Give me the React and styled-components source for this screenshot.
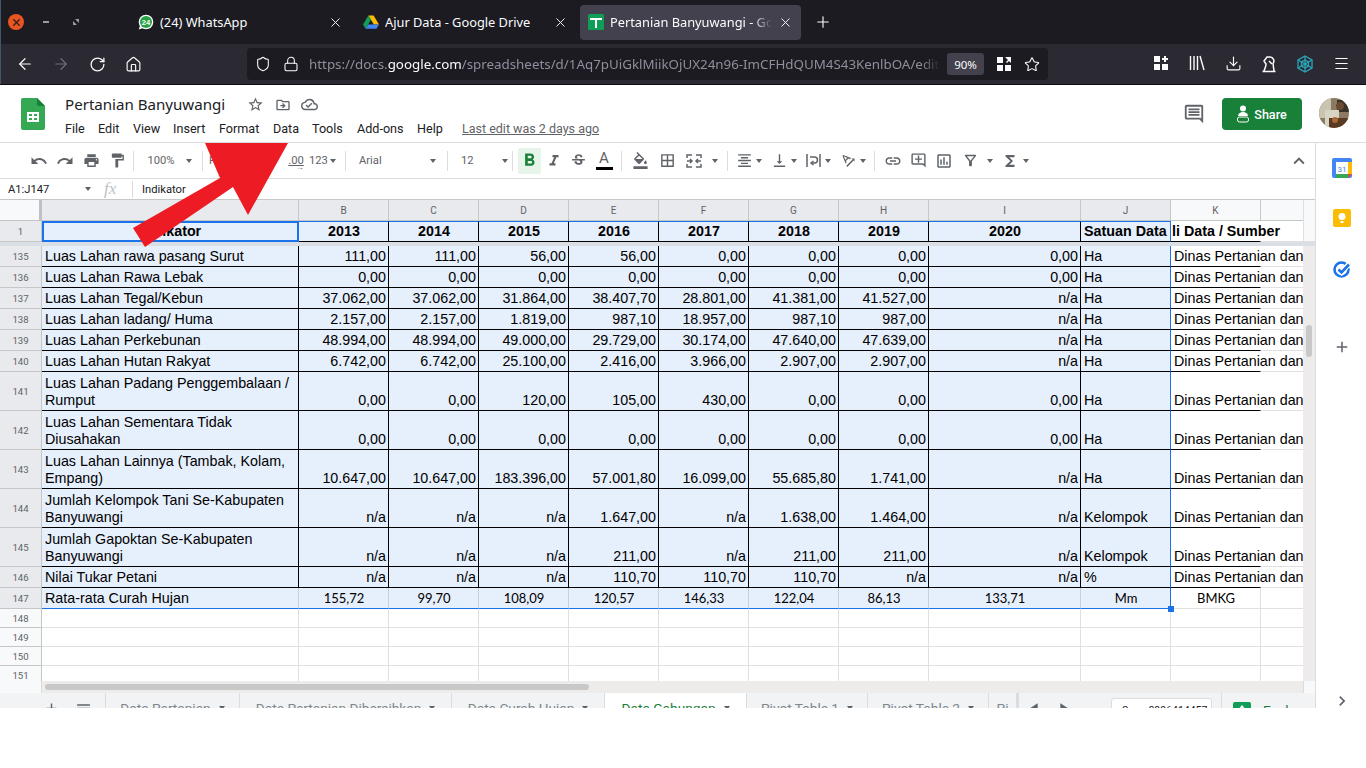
import React from "react";
import styled, { createGlobalStyle } from "styled-components";
import {
  MdUndo, MdRedo, MdLocalPrintshop, MdFormatPaint, MdFormatItalic, MdStrikethroughS,
  MdFormatColorFill, MdBorderAll, MdFormatAlignCenter, MdVerticalAlignBottom,
  MdTextRotationAngleup, MdLink, MdOutlineAddComment, MdOutlineInsertChart, MdOutlineFilterAlt,
  MdFunctions, MdExpandLess, MdStarBorder, MdOutlineDriveFileMove, MdOutlineCloudDone,
  MdOutlineInsertComment, MdAdd, MdMenu, MdChevronRight, MdPlayArrow, MdFormatBold,
} from "react-icons/md";
import { ArrowLeft, ArrowRight, RotateCw, Home, Shield, Lock, Star, X, Plus, Download, Menu } from "lucide-react";

const GlobalStyle = createGlobalStyle`
  html, body { margin: 0; padding: 0; background: #fff; overflow: hidden; }
  * { box-sizing: border-box; }
`;

const Window = styled.div`
  width: 1366px;
  height: 768px;
  overflow: hidden;
  background: #fff;
  font-family: "Noto Sans", sans-serif;
`;

/* browser chrome */
const TabBar = styled.div`
  height: 44px;
  background: #1c1b22;
  display: flex;
  align-items: center;
  color: #fbfbfe;
  box-shadow: inset 1px 0 0 #46566a;
`;
const WinControls = styled.div`
  width: 130px;
  display: flex;
  align-items: center;
  padding-left: 8px;
  gap: 14px;
`;
const CloseDot = styled.div`
  width: 16px;
  height: 16px;
  border-radius: 50%;
  background: #e95420;
  color: #33221c;
  display: flex;
  align-items: center;
  justify-content: center;
`;
const WinGlyph = styled.div`
  width: 16px;
  display: flex;
  justify-content: center;
`;
const Tab = styled.div`
  width: 221px;
  height: 35px;
  margin-right: 4px;
  padding: 0 8px;
  border-radius: 4px;
  display: flex;
  align-items: center;
  gap: 6px;
  font-size: 12.8px;
  background: ${p => (p.$active ? "#42414d" : "transparent")};
`;
const TabLabel = styled.span`
  flex: 1;
  white-space: nowrap;
  overflow: hidden;
  mask-image: ${p => (p.$fade ? "linear-gradient(to right, #000 88%, transparent)" : "none")};
`;
const NewTab = styled.div`
  margin-left: 9px;
  display: flex;
`;
const NavBar = styled.div`
  height: 41px;
  background: #2b2a33;
  border-bottom: 1px solid #0c0c0d;
  padding-left: 7px;
  display: flex;
  align-items: center;
  color: #fbfbfe;
  box-shadow: inset 1px 0 0 #46566a;
`;
const NavBtn = styled.div`
  width: 36px;
  display: flex;
  justify-content: center;
  color: ${p => (p.$off ? "#6f6e77" : "#fbfbfe")};
`;
const UrlBox = styled.div`
  width: 801px;
  height: 32px;
  margin-left: 96px;
  padding: 0 8px;
  border-radius: 4px;
  background: #1c1b22;
  display: flex;
  align-items: center;
`;
const UrlIcon = styled.div`
  width: 16px;
  flex: none;
  margin-right: ${p => p.$mr ?? 12}px;
  display: flex;
  justify-content: center;
`;
const UrlText = styled.div`
  flex: 1;
  min-width: 0;
  font-size: 13.35px;
  color: #8f8f9d;
  white-space: nowrap;
  overflow: hidden;
  mask-image: linear-gradient(to right, #000 97%, transparent);
  b { color: #fbfbfe; font-weight: 400; }
`;
const ZoomBadge = styled.div`
  width: 37px;
  height: 22px;
  flex: none;
  margin: 0 12px 0 7px;
  border-radius: 3px;
  background: #42414d;
  font-size: 11.5px;
  display: flex;
  align-items: center;
  justify-content: center;
`;
const ToolIcons = styled.div`
  margin-left: 95px;
  display: flex;
`;

/* docs header */
const SheetApp = styled.div`
  height: 623px;
  overflow: hidden;
  display: flex;
  flex-direction: column;
  position: relative;
  font-family: Roboto, sans-serif;
  color: #202124;
`;
const DocHeader = styled.div`
  height: 58px;
  flex: none;
  border-bottom: 1px solid #dadce0;
  display: flex;
  align-items: flex-start;
  padding: 13px 0 0 21px;
`;
const DocTitles = styled.div`
  margin: -1px 0 0 20px;
  width: 1060px;
`;
const TitleRow = styled.div`
  display: flex;
  align-items: center;
  height: 19px;
  margin-top: -2px;
`;
const DocTitle = styled.div`
  font-family: "Noto Sans", sans-serif;
  font-size: 15.1px;
  line-height: 19px;
  width: 177px;
`;
const TitleIcon = styled.div`
  width: 27px;
  display: flex;
  justify-content: center;
  color: #5f6368;
`;
const MenuRow = styled.div`
  display: flex;
  margin-top: 7px;
  font-size: 12.6px;
  line-height: 16px;
`;
const MenuItem = styled.span`
  width: ${p => p.$w}px;
`;
const LastEdit = styled.span`
  color: #5f6368;
  text-decoration: underline;
  font-size: 12.5px;
`;
const ShareZone = styled.div`
  margin-left: 58px;
  display: flex;
  align-items: flex-start;
`;
const ShareBtn = styled.div`
  width: 80px;
  height: 32px;
  margin: 0 17px 0 17px;
  border-radius: 4px;
  background: #188038;
  color: #fff;
  font-size: 12.6px;
  font-weight: 500;
  display: flex;
  align-items: center;
  justify-content: center;
  gap: 5px;
`;

/* body */
const Body = styled.div`
  flex: 1;
  min-height: 0;
  display: flex;
`;
const Main = styled.div`
  width: 1316px;
  display: flex;
  flex-direction: column;
  border-right: 1px solid #dadce0;
`;
const Side = styled.div`
  width: 50px;
  display: flex;
  flex-direction: column;
  align-items: center;
  padding: 15px 0 0 1px;
`;
const SideSlot = styled.div`
  height: ${p => p.$h}px;
  flex: none;
  display: flex;
  align-items: flex-start;
  justify-content: center;
  color: #5f6368;
`;
const SideRule = styled.div`
  width: 18px;
  height: 1px;
  background: #dadce0;
  margin-bottom: 30px;
`;
const Toolbar = styled.div`
  height: 36px;
  flex: none;
  border-bottom: 1px solid #dadce0;
  padding-left: 26px;
  display: flex;
  align-items: center;
  color: #5f6368;
  font-size: 11.2px;
`;
const Tool = styled.div`
  width: ${p => p.$w}px;
  height: 26px;
  flex: none;
  margin-left: ${p => p.$ml || 0}px;
  display: flex;
  align-items: center;
  justify-content: ${p => (p.$left ? "flex-start" : "center")};
  padding-left: ${p => p.$pl || 0}px;
  background: ${p => (p.$on ? "#e6f4ea" : "transparent")};
  color: ${p => (p.$on ? "#188038" : "#5f6368")};
  border-radius: 2px;
`;
const Sep = styled.div`
  width: 1px;
  height: 20px;
  flex: none;
  background: #dadce0;
  margin: 0 ${p => p.$m ?? 3}px;
`;
const Caret = styled.span`
  width: 0;
  height: 0;
  flex: none;
  margin-left: ${p => p.$ml ?? 4}px;
  border-left: 3.5px solid transparent;
  border-right: 3.5px solid transparent;
  border-top: 4px solid #5f6368;
`;
const TabCaret = styled(Caret)`
  margin-left: 8px;
  margin-top: 6px;
`;
const DecimalMark = styled.span`
  position: relative;
  text-decoration: underline;
  &::after {
    content: "→";
    position: absolute;
    right: 0;
    top: 9px;
    font-size: 8px;
  }
`;
const ColorA = styled.div`
  display: flex;
  flex-direction: column;
  align-items: center;
  font-size: 15px;
  line-height: 15px;
  &::after { content: ""; width: 17px; height: 3px; background: #000; margin-top: 1px; }
`;
const FormulaBar = styled.div`
  height: 21px;
  flex: none;
  border-bottom: 1px solid #c7c7c7;
  display: flex;
  align-items: center;
  font-size: 11.2px;
  color: #202124;
`;
const NameBox = styled.div`
  width: 104px;
  padding: 0 13px 0 8px;
  display: flex;
  align-items: center;
  justify-content: space-between;
`;
const FxMark = styled.div`
  width: 28px;
  font-family: "Liberation Serif", serif;
  font-style: italic;
  font-size: 17px;
  color: #bdc1c6;
`;
const FormulaText = styled.div`
  border-left: 1px solid #dadce0;
  padding-left: 9px;
  height: 17px;
  line-height: 17px;
`;
const GridArea = styled.div`
  height: 481px;
  flex: none;
  display: flex;
  overflow: hidden;
`;
const Table = styled.div`
  width: 1304px;
  overflow: hidden;
`;
const Row = styled.div`
  height: ${p => p.$h}px;
  display: grid;
  grid-template-columns: 42px 257px repeat(7, 90px) 152px 90px 90px 43px;
`;
const ColHead = styled.div`
  background: ${p => (p.$sel ? "#e8eaed" : "#f8f9fa")};
  border-right: 1px solid #c4c7c5;
  border-bottom: 1px solid #c4c7c5;
  color: #5f6368;
  font-size: 10px;
  display: flex;
  align-items: center;
  justify-content: center;
`;
const Corner = styled(ColHead)`
  border-right: 3px solid #bdc1c6;
  background: #f8f9fa;
`;
const RowHead = styled.div`
  background: ${p => (p.$sel ? "#e8eaed" : "#f8f9fa")};
  border-right: 1px solid #c4c7c5;
  border-bottom: 1px solid #c4c7c5;
  color: #5f6368;
  font-size: 9.6px;
  display: flex;
  align-items: center;
  justify-content: center;
`;
const Cell = styled.div`
  position: relative;
  min-width: 0;
  padding: 0 2px 1px 3px;
  background: ${p => (p.$sel ? "#e6effc" : "transparent")};
  border-right: 1px solid ${p => p.$right || "#000"};
  border-bottom: 1px solid ${p => p.$bottom || "#000"};
  font-family: "Liberation Sans", sans-serif;
  font-size: 14.3px;
  line-height: 17px;
  color: #000;
  display: flex;
  align-items: flex-end;
  justify-content: ${p => (p.$align === "right" ? "flex-end" : p.$align === "center" ? "center" : "flex-start")};
`;
const HeadCell = styled(Cell)`
  font-weight: 700;
  align-items: center;
  padding-bottom: 0;
  border-top: 1px solid ${p => p.$top || "#1a73e8"};
`;
const ActiveCell = styled(HeadCell)`
  border: 2px solid #1a73e8;
  justify-content: center;
`;
const ClippedHead = styled(HeadCell)`
  padding-left: 1px;
`;
const OverText = styled.span`
  white-space: nowrap;
`;
const LabelCell = styled(Cell)`
  align-items: center;
  padding-bottom: 0;
`;
const CurahCell = styled(LabelCell)`
  font-family: Lato, sans-serif;
  font-size: 13px;
`;
const FillHandle = styled.div`
  position: absolute;
  right: -4px;
  bottom: -4px;
  width: 6px;
  height: 6px;
  background: #1a73e8;
  z-index: 2;
`;
const BlankCell = styled.div`
  border-right: 1px solid #e0e0e0;
  border-bottom: 1px solid #e0e0e0;
`;
const TailCell = styled.div`
  border-bottom: 1px solid #e0e0e0;
`;
const FreezeBand = styled.div`
  height: 4px;
  flex: none;
  background: #dadfe6;
`;
const VScroll = styled.div`
  width: 12px;
  background: #edecea;
  display: flex;
  flex-direction: column;
`;
const VScrollHead = styled.div`
  height: 42px;
  flex: none;
  background: #f8f9fa;
  border-left: 1px solid #e0e0e0;
  border-bottom: 1px solid #e0e0e0;
`;
const VThumb = styled.div`
  height: 32px;
  margin: 79px 3px 0;
  background: #c8c8c8;
  border-radius: 3px;
`;
const HScroll = styled.div`
  height: 12px;
  flex: none;
  background: #edecea;
  display: flex;
`;
const HCorner = styled.div`
  width: ${p => p.$w}px;
  flex: none;
  background: #f8f9fa;
  border: 0 solid #dadce0;
  border-width: ${p => (p.$end ? "0 0 0 1px" : "0 1px 0 0")};
`;
const HTrack = styled.div`
  flex: 1;
  padding: 3px 0 0 3px;
`;
const HThumb = styled.div`
  width: 544px;
  height: 6px;
  background: #c8c8c8;
  border-radius: 3px;
`;
const SheetTabs = styled.div`
  height: 37px;
  flex: none;
  background: #f1f3f4;
  display: flex;
  font-size: 13.7px;
  color: #5f6368;
`;
const StripBtn = styled.div`
  width: ${p => p.$w}px;
  margin-left: ${p => p.$ml || 0}px;
  padding-top: 7px;
  display: flex;
  justify-content: center;
  color: #5f6368;
`;
const SheetTab = styled.div`
  width: ${p => p.$w}px;
  padding-top: 7px;
  background: ${p => (p.$on ? "#fff" : "transparent")};
  color: ${p => (p.$on ? "#188038" : "#80868b")};
  border-right: 1px solid #dadce0;
  border-left: ${p => (p.$first ? "1px solid #dadce0" : "0")};
  display: flex;
  justify-content: center;
  white-space: nowrap;
  overflow: hidden;
`;
const StripTail = styled.div`
  flex: 1;
  display: flex;
  border-left: 2px solid #dadce0;
`;
const SumBox = styled.div`
  width: 101px;
  height: 30px;
  margin: 5px 9px 0 34px;
  background: #fff;
  border: 1px solid #dadce0;
  border-radius: 3px;
  font-size: 10.5px;
  color: #202124;
  padding: 5px 0 0 10px;
  white-space: nowrap;
  overflow: hidden;
`;
const Explore = styled.div`
  flex: 1;
  border-left: 1px solid #dadce0;
  padding: 9px 0 0 11px;
  display: flex;
  gap: 12px;
  color: #188038;
`;
const RedArrow = styled.svg`
  position: absolute;
  left: 120px;
  top: 58px;
  pointer-events: none;
  z-index: 5;
`;

const SheetsLogo = () => (
  <svg width="24" height="32" viewBox="0 0 24 32">
    <path d="M2 0h14l8 8v22a2 2 0 0 1-2 2H2a2 2 0 0 1-2-2V2a2 2 0 0 1 2-2z" fill="#34a853" />
    <path d="M16 0l8 8h-6a2 2 0 0 1-2-2z" fill="#188038" />
    <path d="M6 14h12v10H6z M8 16v2h3v-2z M13 16v2h3v-2z M8 20v2h3v-2z M13 20v2h3v-2z" fill="#fff" fillRule="evenodd" />
  </svg>
);

const WhatsIcon = () => (
  <svg width="16" height="16" viewBox="0 0 16 16">
    <circle cx="8" cy="8" r="7.3" fill="#fff" />
    <path d="M.8 15.4l1.2-4 3 2.6z" fill="#fff" />
    <circle cx="8" cy="8" r="6" fill="#25a244" />
    <text x="8" y="10.600" textAnchor="middle" fontSize="7.500" fontWeight="700" fill="#fff" fontFamily="Liberation Sans">24</text>
  </svg>
);

const DriveIcon = () => (
  <svg width="16" height="16" viewBox="0 0 16 16">
    <path d="M5.400 1.500h5.200L16 10.500h-5.200z" fill="#fbbc04" />
    <path d="M5.400 1.500L0 10.500l2.600 4.200L8 5.800z" fill="#0f9d58" />
    <path d="M5.200 10.500H16l-2.600 4.200H2.600z" fill="#4285f4" />
  </svg>
);

const SheetTabIcon = () => (
  <svg width="16" height="16" viewBox="0 0 16 16">
    <rect width="16" height="16" rx="1.500" fill="#0f9d58" />
    <path d="M2 4h12v2H9v8H7V6H2z" fill="#fff" />
  </svg>
);

const FourSquares = ({ plus }) => (
  <svg width="16" height="16" viewBox="0 0 16 16" fill="#fbfbfe">
    <rect x="1" y="1" width="6" height="6" />
    <rect x="1" y="9" width="6" height="6" />
    <rect x="9" y="9" width="6" height="6" />
    {plus ? <path d="M11 1h2v2h2v2h-2v2h-2V5H9V3h2z" /> : <path d="M9 1h6v6l-2-2-2 2-1-1 2-2z" />}
  </svg>
);

const LibraryIcon = () => (
  <svg width="16" height="16" viewBox="0 0 16 16" fill="none" stroke="#fbfbfe" strokeWidth="1.400">
    <path d="M1.500 1v14M5 1v14M8.500 1v14M11 1l4 14" />
  </svg>
);

const Spider = () => (
  <svg width="18" height="18" viewBox="0 0 18 18" fill="none" stroke="#2aa3b8" strokeWidth="1.300">
    <path d="M9 1l7 4v8l-7 4-7-4V5z" />
    <path d="M9 5l3.500 2v4L9 13l-3.500-2V7z" />
    <path d="M9 1v16M2 5l14 8M16 5L2 13" />
  </svg>
);

const Reader = () => (
  <svg width="16" height="18" viewBox="0 0 16 18" fill="none" stroke="#fbfbfe" strokeWidth="1.500">
    <path d="M3 16c1-3 2-4 2-7L3 6l3-4h3a4 4 0 0 1 3 6.500L13 16" />
    <path d="M1.500 16.500h13M8 6l3 3" />
  </svg>
);

const MergeIcon = () => (
  <svg width="16" height="16" viewBox="0 0 16 16" fill="none" stroke="#5f6368" strokeWidth="1.500">
    <path d="M1 5V2h5M10 2h5v3M1 11v3h5M10 14h5v-3M1 8h4M15 8h-4M4 6l2 2-2 2M12 6l-2 2 2 2" />
  </svg>
);

const WrapIcon = () => (
  <svg width="17" height="17" viewBox="0 0 17 17" fill="none" stroke="#5f6368" strokeWidth="1.500">
    <path d="M2 2v13M15 2v13M5 5h4.500a2.500 2.500 0 0 1 0 6H7" />
    <path d="M8.500 9L6 11l2.500 2" />
  </svg>
);

const CalendarIcon = () => (
  <svg width="20" height="20" viewBox="0 0 20 20">
    <rect width="20" height="20" rx="2" fill="#4285f4" />
    <rect x="4" y="4" width="12" height="12" fill="#fff" />
    <rect x="16" y="4" width="4" height="12" fill="#fbbc04" />
    <rect x="4" y="16" width="12" height="4" fill="#34a853" />
    <path d="M16 16h4l-4 4z" fill="#ea4335" />
    <text x="10" y="13.500" textAnchor="middle" fontSize="8" fill="#4285f4" fontFamily="Roboto">31</text>
  </svg>
);

const KeepIcon = () => (
  <svg width="18" height="18" viewBox="0 0 18 18">
    <rect width="18" height="18" rx="2" fill="#fbbc04" />
    <circle cx="9" cy="7.500" r="3.500" fill="#fff" />
    <rect x="7.500" y="12" width="3" height="2" fill="#fff" />
  </svg>
);

const TasksIcon = () => (
  <svg width="20" height="20" viewBox="0 0 20 20" fill="none">
    <circle cx="9.500" cy="10.500" r="7" stroke="#1a73e8" strokeWidth="2.600" />
    <path d="M6 10l3.500 3.500L17 5" stroke="#fff" strokeWidth="5" />
    <path d="M6.500 10.500l3 3L17 5.500" stroke="#1a73e8" strokeWidth="2.600" />
  </svg>
);

const Avatar = () => (
  <svg width="30" height="30" viewBox="0 0 30 30">
    <clipPath id="av"><circle cx="15" cy="15" r="15" /></clipPath>
    <g clipPath="url(#av)">
      <rect width="30" height="30" fill="#8c7a62" />
      <rect width="12" height="20" fill="#c9c4b0" />
      <rect x="18" y="2" width="12" height="12" fill="#3b3227" />
      <circle cx="21" cy="8" r="4" fill="#6b4a32" />
      <rect x="6" y="12" width="14" height="18" fill="#d8d4c4" />
      <rect x="10" y="20" width="20" height="10" fill="#5a3a22" />
      <circle cx="16" cy="22" r="3" fill="#a8683a" />
    </g>
  </svg>
);

const rows = [
  [135, 21, "Luas Lahan rawa pasang Surut", ["111,00", "111,00", "56,00", "56,00", "0,00", "0,00", "0,00", "0,00"], "Ha"],
  [136, 21, "Luas Lahan Rawa Lebak", ["0,00", "0,00", "0,00", "0,00", "0,00", "0,00", "0,00", "0,00"], "Ha"],
  [137, 21, "Luas Lahan Tegal/Kebun", ["37.062,00", "37.062,00", "31.864,00", "38.407,70", "28.801,00", "41.381,00", "41.527,00", "n/a"], "Ha"],
  [138, 21, "Luas Lahan ladang/ Huma", ["2.157,00", "2.157,00", "1.819,00", "987,10", "18.957,00", "987,10", "987,00", "n/a"], "Ha"],
  [139, 21, "Luas Lahan Perkebunan", ["48.994,00", "48.994,00", "49.000,00", "29.729,00", "30.174,00", "47.640,00", "47.639,00", "n/a"], "Ha"],
  [140, 21, "Luas Lahan Hutan Rakyat", ["6.742,00", "6.742,00", "25.100,00", "2.416,00", "3.966,00", "2.907,00", "2.907,00", "n/a"], "Ha"],
  [141, 39, "Luas Lahan Padang Penggembalaan / Rumput", ["0,00", "0,00", "120,00", "105,00", "430,00", "0,00", "0,00", "0,00"], "Ha"],
  [142, 39, "Luas Lahan Sementara Tidak Diusahakan", ["0,00", "0,00", "0,00", "0,00", "0,00", "0,00", "0,00", "0,00"], "Ha"],
  [143, 39, "Luas Lahan Lainnya (Tambak, Kolam, Empang)", ["10.647,00", "10.647,00", "183.396,00", "57.001,80", "16.099,00", "55.685,80", "1.741,00", "n/a"], "Ha"],
  [144, 39, "Jumlah Kelompok Tani Se-Kabupaten Banyuwangi", ["n/a", "n/a", "n/a", "1.647,00", "n/a", "1.638,00", "1.464,00", "n/a"], "Kelompok"],
  [145, 39, "Jumlah Gapoktan Se-Kabupaten Banyuwangi", ["n/a", "n/a", "n/a", "211,00", "n/a", "211,00", "211,00", "n/a"], "Kelompok"],
  [146, 21, "Nilai Tukar Petani", ["n/a", "n/a", "n/a", "110,70", "110,70", "110,70", "n/a", "n/a"], "%"],
];

const years = ["2013", "2014", "2015", "2016", "2017", "2018", "2019", "2020"];
const colLetters = ["B", "C", "D", "E", "F", "G", "H", "I", "J"];
const curah = ["155,72", "99,70", "108,09", "120,57", "146,33", "122,04", "86,13", "133,71"];
const BLUE = "#1a73e8";
const SOFT = "#c7d0df";

function DataRow({ num, h, label, values, unit }) {
  return (
    <Row $h={h}>
      <RowHead $sel>{num}</RowHead>
      <Cell $sel>{label}</Cell>
      {values.map((v, i) => (
        <Cell key={i} $sel $align="right">{v}</Cell>
      ))}
      <Cell $sel $right={BLUE}>{unit}</Cell>
      <Cell $right="transparent"><OverText>Dinas Pertanian dan Peternakan</OverText></Cell>
      <TailCell />
    </Row>
  );
}

function EmptyRow({ num, h }) {
  return (
    <Row $h={h}>
      <RowHead>{num}</RowHead>
      {Array.from({ length: 12 }).map((_, i) => <BlankCell key={i} />)}
    </Row>
  );
}

export default function App() {
  return (
    <Window>
      <GlobalStyle />
      <TabBar>
        <WinControls>
          <CloseDot><X size={11} strokeWidth={3} /></CloseDot>
          <WinGlyph><svg width="8" height="8"><rect x="1" y="3" width="6" height="2" fill="#9a9aa0" /></svg></WinGlyph>
          <WinGlyph><svg width="8" height="8"><path d="M3 1h4v4zM1 3v4h4z" fill="#9a9aa0" /></svg></WinGlyph>
        </WinControls>
        <Tab>
          <WhatsIcon />
          <TabLabel>(24) WhatsApp</TabLabel>
          <X size={15} strokeWidth={1.5} />
        </Tab>
        <Tab>
          <DriveIcon />
          <TabLabel>Ajur Data - Google Drive</TabLabel>
          <X size={15} strokeWidth={1.5} />
        </Tab>
        <Tab $active>
          <SheetTabIcon />
          <TabLabel $fade>Pertanian Banyuwangi - Google Sheets</TabLabel>
          <X size={15} strokeWidth={1.5} />
        </Tab>
        <NewTab><Plus size={18} strokeWidth={1.5} /></NewTab>
      </TabBar>
      <NavBar>
        <NavBtn><ArrowLeft size={18} strokeWidth={1.6} /></NavBtn>
        <NavBtn $off><ArrowRight size={18} strokeWidth={1.6} /></NavBtn>
        <NavBtn><RotateCw size={17} strokeWidth={1.8} /></NavBtn>
        <NavBtn><Home size={17} strokeWidth={1.6} /></NavBtn>
        <UrlBox>
          <UrlIcon><Shield size={16} strokeWidth={1.6} /></UrlIcon>
          <UrlIcon $mr={10}><Lock size={16} strokeWidth={1.6} /></UrlIcon>
          <UrlText>https://docs.<b>google.com</b>/spreadsheets/d/1Aq7pUiGklMiikOjUX24n96-ImCFHdQUM4S43KenlbOA/edit#gid=2</UrlText>
          <ZoomBadge>90%</ZoomBadge>
          <UrlIcon><FourSquares /></UrlIcon>
          <UrlIcon $mr={0}><Star size={17} strokeWidth={1.6} /></UrlIcon>
        </UrlBox>
        <ToolIcons>
          <NavBtn><FourSquares plus /></NavBtn>
          <NavBtn><LibraryIcon /></NavBtn>
          <NavBtn><Download size={17} strokeWidth={1.6} /></NavBtn>
          <NavBtn><Reader /></NavBtn>
          <NavBtn><Spider /></NavBtn>
          <NavBtn><Menu size={17} strokeWidth={1.6} /></NavBtn>
        </ToolIcons>
      </NavBar>

      <SheetApp>
        <DocHeader>
          <SheetsLogo />
          <DocTitles>
            <TitleRow>
              <DocTitle>Pertanian Banyuwangi</DocTitle>
              <TitleIcon><MdStarBorder size={17} /></TitleIcon>
              <TitleIcon><MdOutlineDriveFileMove size={16} /></TitleIcon>
              <TitleIcon><MdOutlineCloudDone size={17} /></TitleIcon>
            </TitleRow>
            <MenuRow>
              <MenuItem $w={33}>File</MenuItem>
              <MenuItem $w={35}>Edit</MenuItem>
              <MenuItem $w={40}>View</MenuItem>
              <MenuItem $w={46}>Insert</MenuItem>
              <MenuItem $w={54}>Format</MenuItem>
              <MenuItem $w={39}>Data</MenuItem>
              <MenuItem $w={45}>Tools</MenuItem>
              <MenuItem $w={60}>Add-ons</MenuItem>
              <MenuItem $w={45}>Help</MenuItem>
              <LastEdit>Last edit was 2 days ago</LastEdit>
            </MenuRow>
          </DocTitles>
          <ShareZone>
            <MdOutlineInsertComment size={22} color="#5f6368" style={{ marginTop: 5 }} />
            <ShareBtn>
              <svg width="12" height="18" viewBox="0 0 12 18" fill="#fff"><circle cx="6" cy="3.500" r="3" /><path d="M1 11a5 4 0 0 1 10 0z" /><rect x="0.500" y="12" width="11" height="5" rx="2" fill="none" stroke="#fff" /></svg>
              Share
            </ShareBtn>
            <Avatar />
          </ShareZone>
        </DocHeader>
        <Body>
          <Main>
            <Toolbar>
              <Tool $w={26}><MdUndo size={18} /></Tool>
              <Tool $w={26}><MdRedo size={18} /></Tool>
              <Tool $w={26}><MdLocalPrintshop size={17} /></Tool>
              <Tool $w={26}><MdFormatPaint size={17} /></Tool>
              <Sep />
              <Tool $w={65}>100%<Caret $ml={11} /></Tool>
              <Sep $m={0} />
              <Tool $w={80} $left $pl={6}>Rp</Tool>
              <Tool $w={26}><DecimalMark>.00</DecimalMark></Tool>
              <Tool $w={36} $left>123<Caret $ml={2} /></Tool>
              <Sep $m={0} />
              <Tool $w={101} $left $pl={13}>Arial<Caret $ml={48} /></Tool>
              <Sep $m={0} />
              <Tool $w={59} $left $pl={13}>12<Caret $ml={28} /></Tool>
              <Sep $m={5} />
              <Tool $w={23} $on><MdFormatBold size={21} /></Tool>
              <Tool $w={25}><MdFormatItalic size={18} /></Tool>
              <Tool $w={25}><MdStrikethroughS size={17} /></Tool>
              <Tool $w={26}><ColorA>A</ColorA></Tool>
              <Sep $m={4} />
              <Tool $w={26} $ml={1}><MdFormatColorFill size={17} /></Tool>
              <Tool $w={28}><MdBorderAll size={17} /></Tool>
              <Tool $w={26}><MergeIcon /></Tool>
              <Tool $w={16}><Caret $ml={0} /></Tool>
              <Sep $m={4} />
              <Tool $w={32} $ml={1}><MdFormatAlignCenter size={17} /><Caret $ml={3} /></Tool>
              <Tool $w={32} $ml={3}><MdVerticalAlignBottom size={17} /><Caret $ml={3} /></Tool>
              <Tool $w={32} $ml={2}><WrapIcon /><Caret $ml={3} /></Tool>
              <Tool $w={32} $ml={3}><MdTextRotationAngleup size={17} /><Caret $ml={3} /></Tool>
              <Sep $m={5} />
              <Tool $w={25}><MdLink size={18} /></Tool>
              <Tool $w={26}><MdOutlineAddComment size={17} /></Tool>
              <Tool $w={26}><MdOutlineInsertChart size={18} /></Tool>
              <Tool $w={26}><MdOutlineFilterAlt size={17} /></Tool>
              <Tool $w={14}><Caret $ml={0} /></Tool>
              <Tool $w={26}><MdFunctions size={18} /></Tool>
              <Tool $w={6}><Caret $ml={0} /></Tool>
              <Tool $w={26} $ml={257}><MdExpandLess size={22} /></Tool>
            </Toolbar>
            <FormulaBar>
              <NameBox>A1:J147<Caret $ml={0} /></NameBox>
              <FxMark>fx</FxMark>
              <FormulaText>Indikator</FormulaText>
            </FormulaBar>
            <GridArea>
              <Table>
                <Row $h={21}>
                  <Corner />
                  <ColHead $sel />
                  {colLetters.map(c => <ColHead key={c} $sel>{c}</ColHead>)}
                  <ColHead>K</ColHead>
                  <ColHead />
                </Row>
                <Row $h={21}>
                  <RowHead $sel>1</RowHead>
                  <ActiveCell $sel>Indikator</ActiveCell>
                  {years.map(y => <HeadCell key={y} $sel $align="center">{y}</HeadCell>)}
                  <HeadCell $sel $right={BLUE}>Satuan Data</HeadCell>
                  <ClippedHead $right="transparent" $top="transparent"><OverText>li Data / Sumber</OverText></ClippedHead>
                  <TailCell />
                </Row>
                <FreezeBand />
                {rows.map(([num, h, label, values, unit]) => (
                  <DataRow key={num} num={num} h={h} label={label} values={values} unit={unit} />
                ))}
                <Row $h={21}>
                  <RowHead $sel>147</RowHead>
                  <LabelCell $sel $right={SOFT} $bottom={BLUE}>Rata-rata Curah Hujan</LabelCell>
                  {curah.map((v, i) => (
                    <CurahCell key={i} $sel $align="center" $right={SOFT} $bottom={BLUE}>{v}</CurahCell>
                  ))}
                  <CurahCell $sel $align="center" $right={BLUE} $bottom={BLUE}>Mm<FillHandle /></CurahCell>
                  <CurahCell $align="center" $right="#e0e0e0" $bottom="#e0e0e0">BMKG</CurahCell>
                  <BlankCell />
                </Row>
                <EmptyRow num={148} h={19} />
                <EmptyRow num={149} h={19} />
                <EmptyRow num={150} h={19} />
                <EmptyRow num={151} h={19} />
              </Table>
              <VScroll>
                <VScrollHead />
                <FreezeBand />
                <VThumb />
              </VScroll>
            </GridArea>
            <HScroll>
              <HCorner $w={42} />
              <HTrack><HThumb /></HTrack>
              <HCorner $w={12} $end />
            </HScroll>
            <SheetTabs>
              <StripBtn $w={20} $ml={41}><MdAdd size={17} /></StripBtn>
              <StripBtn $w={44}><MdMenu size={17} /></StripBtn>
              <SheetTab $w={135} $first>Data Pertanian<TabCaret /></SheetTab>
              <SheetTab $w={212}>Data Pertanian Dibersihkan<TabCaret /></SheetTab>
              <SheetTab $w={153}>Data Curah Hujan<TabCaret /></SheetTab>
              <SheetTab $w={142} $on>Data Gabungan<TabCaret /></SheetTab>
              <SheetTab $w={121}>Pivot Table 1<TabCaret /></SheetTab>
              <SheetTab $w={121}>Pivot Table 2<TabCaret /></SheetTab>
              <SheetTab $w={28}>Pi</SheetTab>
              <StripTail>
                <StripBtn $w={28} $ml={2}><MdPlayArrow size={16} style={{ transform: "rotate(180deg)" }} /></StripBtn>
                <StripBtn $w={28}><MdPlayArrow size={16} /></StripBtn>
                <SumBox>Sum: 8996414457</SumBox>
                <Explore>
                  <svg width="18" height="18" viewBox="0 0 18 18"><rect width="18" height="18" rx="2" fill="#0f9d58" /><path d="M9 3l5 6h-3v5H7V9H4z" fill="#fff" /></svg>
                  <span>Explore</span>
                </Explore>
              </StripTail>
            </SheetTabs>
          </Main>
          <Side>
            <SideSlot $h={51}><CalendarIcon /></SideSlot>
            <SideSlot $h={50}><KeepIcon /></SideSlot>
            <SideSlot $h={49}><TasksIcon /></SideSlot>
            <SideRule />
            <SideSlot $h={353}><MdAdd size={18} /></SideSlot>
            <SideSlot $h={20}><MdChevronRight size={20} /></SideSlot>
          </Side>
        </Body>
        <RedArrow width="180" height="130" viewBox="0 0 180 130">
          <polygon points="85,0 168,0 128,72 113,44 25,104 13,85 100,35" fill="#ed1c24" />
        </RedArrow>
      </SheetApp>
    </Window>
  );
}
